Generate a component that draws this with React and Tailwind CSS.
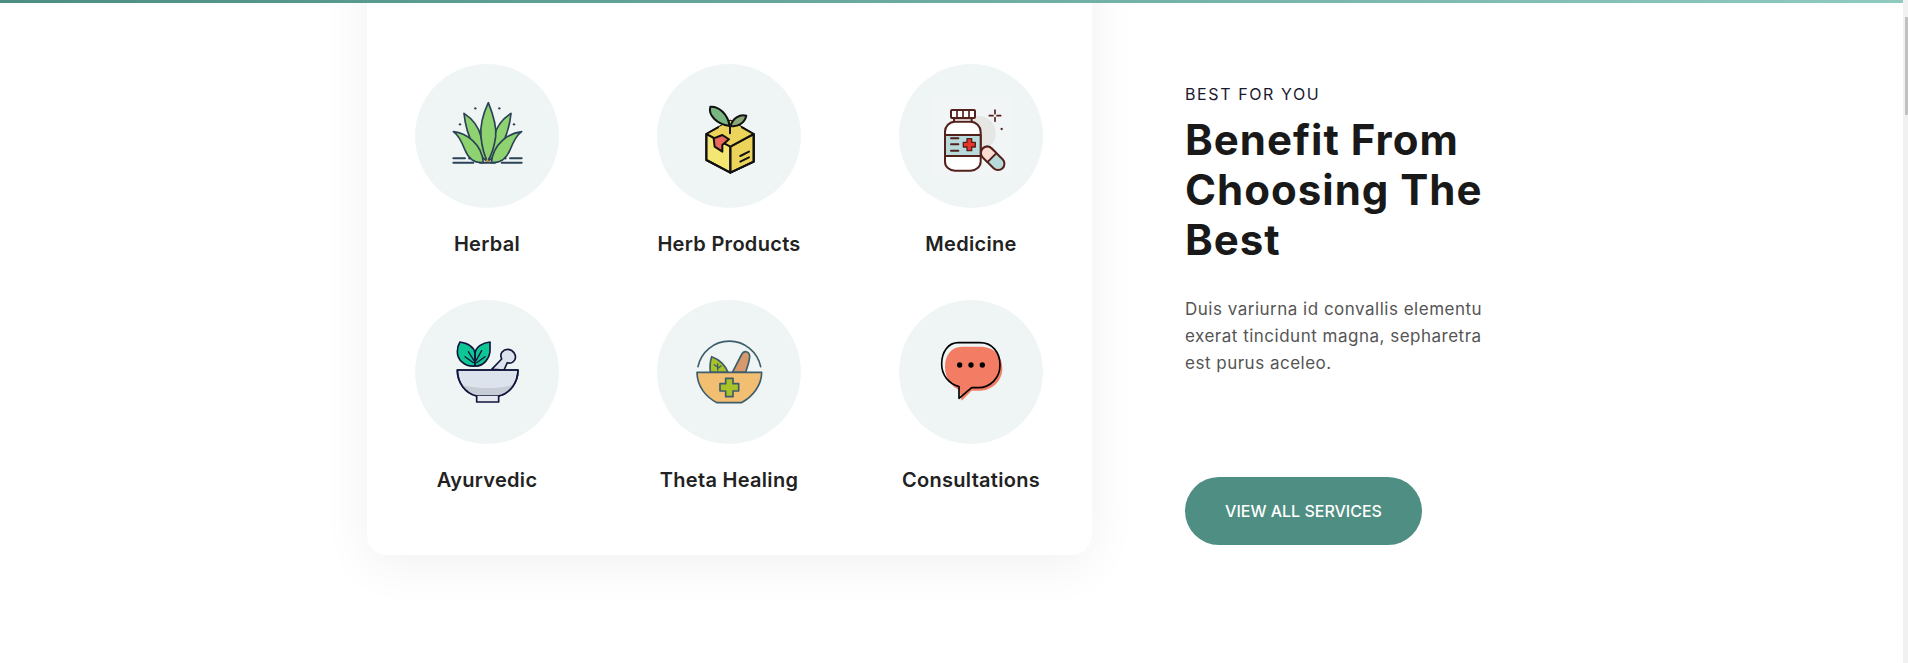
const POP = "font-['Inter','Liberation_Sans',sans-serif]";

const iconBox = 'w-[144px] h-[144px]';

const Herbal = () => (
  <svg viewBox="45 42 432 432" className={iconBox} fill="none" stroke="#2b4257" strokeWidth="5" strokeLinejoin="round" strokeLinecap="round">
    <path d="M192 190 C215 205 235 225 243 260 C250 290 258 315 262 335 C235 315 200 270 192 190Z" fill="#8ed36f" />
    <path d="M333 190 C310 205 290 225 282 260 C275 290 267 315 263 335 C290 315 325 270 333 190Z" fill="#8ed36f" />
    <path d="M265 158 C250 190 240 230 243 260 C246 295 255 320 262 335 C272 320 283 290 287 260 C290 230 278 190 265 158Z" fill="#8ed36f" />
    <path d="M160 245 C200 250 245 280 250 338 C220 340 205 325 195 300 C185 275 175 255 160 245Z" fill="#8ed36f" />
    <path d="M365 245 C325 250 280 280 274 338 C305 340 320 325 330 300 C340 275 350 255 365 245Z" fill="#8ed36f" />
    <path d="M160 325H195M160 338H220M305 338H365M330 325H365M240 338H285" strokeWidth="6" />
    <path d="M262 326l-6 9h12z" fill="#d99a3c" stroke="none" />
    <g fill="#2b4257" stroke="none">
      <circle cx="226" cy="175" r="3.500" /><circle cx="298" cy="175" r="3.500" /><circle cx="180" cy="223" r="3.500" />
      <circle cx="342" cy="223" r="3.500" /><circle cx="208" cy="325" r="3.500" /><circle cx="316" cy="325" r="3.500" />
    </g>
  </svg>
);

const HerbBox = () => (
  <svg viewBox="22 42 432 432" className={iconBox} fill="none" stroke="#111" strokeWidth="6" strokeLinejoin="round" strokeLinecap="round">
    <path d="M170 252 L242 212 L312 252 L312 335 L242 368 L170 330Z" fill="#f3e673" />
    <path d="M242 290 L312 252 L312 335 L242 368Z" fill="#ecd45a" />
    <path d="M170 252 L242 212 L312 252 L242 290Z" fill="#ecd45a" stroke="none" />
    <path d="M170 252 L205 232M277 232 L312 252 L312 335 L242 368 L170 330 L170 252 L242 290 L312 252M242 290V368" />
    <path d="M192 265 L218 255 L238 268 L218 285 L218 305 L195 290Z" fill="#e96a5c" />
    <path d="M272 318L298 305M272 335L298 322" />
    <path d="M240 228 C235 195 210 168 182 170 C175 195 200 222 240 228Z" fill="#78b57f" />
    <path d="M243 228 C248 205 270 192 290 197 C285 218 265 232 243 228Z" fill="#8aa777" />
    <path d="M241 225V250" />
  </svg>
);

const Medicine = () => (
  <svg viewBox="27 42 432 432" className={iconBox} fill="none" stroke="#53201c" strokeWidth="6" strokeLinejoin="round" strokeLinecap="round">
    <rect x="130" y="140" width="235" height="235" fill="#f2f5f5" stroke="none" />
    <circle cx="265" cy="250" r="52" fill="#e6e6e4" stroke="none" />
    <rect x="192" y="205" width="53" height="14" fill="#fff" />
    <path d="M195 215H242 C258 215 272 230 272 245 V335 C272 350 258 362 242 362 H195 C178 362 165 350 165 335 V245 C165 230 178 215 195 215Z" fill="#fff" />
    <rect x="165" y="255" width="107" height="63" fill="#b9dadb" />
    <rect x="183" y="180" width="72" height="24" rx="3" fill="#fff" />
    <path d="M201 182V202M219 182V202M237 182V202" strokeWidth="5" />
    <path d="M183 265H205M183 283H205M183 302H205" />
    <path d="M231 266H245V277H256V291H245V302H231V291H220V277H231Z" fill="#e5362b" stroke="#53201c" strokeWidth="4" />
    <g transform="rotate(-45 308 325)">
      <rect x="289" y="283" width="38" height="84" rx="19" fill="#b9dadb" />
      <path d="M289 322V302A19 19 0 0 1 327 302V322Z" fill="#fbdcd3" />
    </g>
    <path d="M315 180V191M315 203V214M298 197H309M321 197H332" strokeWidth="5" />
    <circle cx="335" cy="237" r="3.500" fill="#53201c" stroke="none" />
  </svg>
);

const Ayurvedic = () => (
  <svg viewBox="45 30 432 432" className={iconBox} fill="none" stroke="#12163c" strokeWidth="5" strokeLinejoin="round" strokeLinecap="round">
    <path d="M225 228 C195 232 172 210 172 185 C172 172 176 162 180 156 C205 160 222 170 225 190Z" fill="#0fc695" />
    <path d="M225 228 C250 230 270 205 270 180 C270 170 270 162 270 156 C248 158 228 170 225 190Z" fill="#0fc695" />
    <path d="M225 225V190M205 185L222 212M195 200L220 218M245 182L228 212M255 200L230 218" strokeWidth="4" />
    <path d="M275 238 L305 207 C297 190 310 177 325 178 C340 180 350 195 345 208 C340 218 330 221 322 218 L312 240Z" fill="#dde3ec" />
    <path d="M172 240H354 C354 278 330 310 296 318 H230 C196 310 172 278 172 240Z" fill="#dde3ec" />
    <path d="M183 283 C215 298 310 298 343 283 C330 305 312 315 296 318 H230 C212 315 195 303 183 283Z" fill="#c7ccd5" stroke="none" />
    <path d="M172 240H354 C354 278 330 310 296 318 H230 C196 310 172 278 172 240Z" />
    <path d="M230 318V336H296V318" fill="#e6eaf0" />
  </svg>
);

const Theta = () => (
  <svg viewBox="22 30 432 432" className={iconBox} fill="none" stroke="#3c5d6c" strokeWidth="5" strokeLinejoin="round" strokeLinecap="round">
    <path d="M145 230 A96 96 0 0 1 333 230" />
    <path d="M182 247 C180 230 182 212 186 200 C210 208 228 228 235 247Z" fill="#a8c228" />
    <path d="M204 240V222M204 232L194 224M204 235L214 228" strokeWidth="4" />
    <path d="M248 247 L275 195 C282 180 298 183 300 198 C300 215 292 232 288 247Z" fill="#d6996d" />
    <path d="M142 247H336 C336 285 310 320 275 338H202 C170 322 142 290 142 247Z" fill="#f2be72" />
    <path d="M228 265H250V281H267V303H250V320H228V303H211V281H228Z" fill="#a8c228" />
  </svg>
);

const Consult = () => (
  <svg viewBox="27 30 432 432" className={iconBox} fill="none" strokeLinecap="round" strokeLinejoin="round">
    <path d="M215 170H270 C310 170 337 195 337 235 C337 275 305 302 270 302H245L215 332L208 300 C185 290 165 265 165 230 C165 195 185 170 215 170Z" fill="#f37c64" />
    <path d="M205 158H270 C305 158 330 185 330 225 C330 265 300 293 265 293H245L207 325V290 C175 280 155 255 155 222 C155 185 175 158 205 158Z" stroke="#000" strokeWidth="5" />
    <g fill="#000">
      <circle cx="209" cy="225" r="8" /><circle cx="243" cy="225" r="8" /><circle cx="277" cy="225" r="8" />
    </g>
  </svg>
);

const services = [
  { label: 'Herbal', icon: <Herbal /> },
  { label: 'Herb Products', icon: <HerbBox /> },
  { label: 'Medicine', icon: <Medicine /> },
  { label: 'Ayurvedic', icon: <Ayurvedic /> },
  { label: 'Theta Healing', icon: <Theta /> },
  { label: 'Consultations', icon: <Consult /> },
];

export default function App() {
  return (
    <div className={`relative h-[663px] overflow-hidden bg-white ${POP}`}>
      <div className="relative z-10 h-[3px] w-full bg-gradient-to-r from-[#4d8e82] to-[#8fcabf]" />

      <div className="flex items-start pl-[367px]">
        {/* card runs up under the top bar, only its bottom corners show */}
        <div className="-mt-[60px] w-[725px] h-[612px] rounded-b-[20px] bg-white shadow-[0_10px_50px_rgba(0,0,0,0.06)] pl-[48px] pt-[121px]">
          <div className="grid grid-cols-[144px_144px_144px] gap-x-[98px] gap-y-[41px]">
            {services.map((s) => (
              <div key={s.label} className="flex flex-col items-center">
                <div className="w-[144px] h-[144px] rounded-full bg-[#eff5f5]">{s.icon}</div>
                <div className="mt-[21px] h-[30px] whitespace-nowrap text-[20px] leading-[30px] tracking-[0.3px] font-semibold text-[#222]">
                  {s.label}
                </div>
              </div>
            ))}
          </div>
        </div>

        <div className="ml-[93px] pt-[79px] w-[320px]">
          <div className="text-[16px] leading-[24px] tracking-[1.6px] text-[#1a1a2e]">BEST FOR YOU</div>
          <h2 className="mt-[9px] w-[300px] text-[42px] leading-[50px] tracking-[1px] font-bold text-[#191919]">
            Benefit From Choosing The Best
          </h2>
          <p className="mt-[31px] w-[310px] text-[17px] leading-[27px] tracking-[0.5px] text-[#555]">
            Duis variurna id convallis elementu exerat tincidunt magna, sepharetra est purus aceleo.
          </p>
          <div className="mt-[100px] flex h-[68px] w-[237px] items-center justify-center rounded-[34px] bg-[#4f8e82] text-[16px] font-medium text-white">
            VIEW ALL SERVICES
          </div>
        </div>
      </div>

      {/* fake scrollbar */}
      <div className="absolute right-0 top-0 z-20 h-full w-[5px] bg-[#f1f1f1]">
        <div className="ml-[2px] mt-[17px] h-[98px] w-[3px] bg-[#c1c1c1]" />
      </div>
    </div>
  );
}
